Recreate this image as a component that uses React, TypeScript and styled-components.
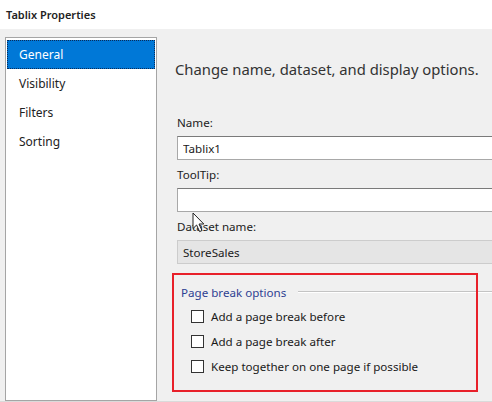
import styled, { createGlobalStyle } from "styled-components";

const GlobalStyle = createGlobalStyle`
  html, body {
    margin: 0;
    padding: 0;
    background: #f0f0f0;
  }
  body {
    font-family: "Noto Sans", "Open Sans", sans-serif;
    font-size: 11.6px;
    color: #1a1a1a;
  }
`;

const pages = ["General", "Visibility", "Filters", "Sorting"];
const breakOptions = [
  "Add a page break before",
  "Add a page break after",
  "Keep together on one page if possible",
];

export default function App() {
  return (
    <>
      <GlobalStyle />
      <Window>
        <TitleBar>Tablix Properties</TitleBar>
        <Body>
          <Sidebar>
            {pages.map((p, i) => (
              <NavItem key={p} $active={i === 0}>
                {p}
              </NavItem>
            ))}
          </Sidebar>
          <Main>
            <Heading>Change name, dataset, and display options.</Heading>
            <Label $first>Name:</Label>
            <TextBox defaultValue="Tablix1" />
            <Label>ToolTip:</Label>
            <FieldWrap>
              <TextBox defaultValue="" />
              <Cursor width="13" height="21" viewBox="0 0 13 21">
                <path
                  d="M1 1 L1 16.5 L4.6 13 L7.6 19.6 L10 18.5 L7 12 L11.8 12 Z"
                  fill="#fff"
                  stroke="#222"
                  strokeWidth="1"
                  strokeLinejoin="round"
                />
              </Cursor>
            </FieldWrap>
            <Label>Dataset name:</Label>
            <Dropdown>StoreSales</Dropdown>
            <GroupBox>
              <Legend>
                <LegendText>Page break options</LegendText>
                <LegendLine />
              </Legend>
              {breakOptions.map((o) => (
                <CheckRow key={o}>
                  <CheckBox />
                  <span>{o}</span>
                </CheckRow>
              ))}
              <Annotation />
            </GroupBox>
          </Main>
        </Body>
      </Window>
    </>
  );
}

const Window = styled.div`
  width: 492px;
  height: 402px;
  overflow: hidden;
  display: flex;
  flex-direction: column;
  background: #f0f0f0;
`;

const TitleBar = styled.div`
  height: 29px;
  flex: 0 0 29px;
  background: #fff;
  padding-left: 6px;
  display: flex;
  align-items: center;
  font-weight: 600;
  font-size: 11px;
  color: #222;
  box-sizing: border-box;
`;

const Body = styled.div`
  flex: 1;
  display: flex;
  align-items: flex-start;
  overflow: hidden;
  border-bottom: 1px solid #dadada;
`;

const Sidebar = styled.div`
  flex: 0 0 152px;
  margin: 8px 0 0 5px;
  width: 152px;
  height: 364px;
  box-sizing: border-box;
  border: 1px solid #a5a5a5;
  background: #fff;
  padding: 2px 1px;
  display: flex;
  flex-direction: column;
`;

const NavItem = styled.div<{ $active?: boolean }>`
  height: 29px;
  flex: 0 0 29px;
  display: flex;
  align-items: center;
  padding-left: 12px;
  font-size: 12px;
  box-sizing: border-box;
  color: ${(p) => (p.$active ? "#fff" : "#222")};
  background: ${(p) => (p.$active ? "#0078d7" : "transparent")};
  outline: ${(p) => (p.$active ? "1px dotted #0a2c5a" : "none")};
  outline-offset: -1px;
`;

const Main = styled.div`
  flex: 0 0 340px;
  margin-left: 20px;
  padding-top: 30px;
  display: flex;
  flex-direction: column;
`;

const Heading = styled.div`
  font-size: 14.8px;
  line-height: 20px;
  color: #333;
  margin-left: -2px;
  white-space: nowrap;
`;

const Label = styled.div<{ $first?: boolean }>`
  line-height: 16px;
  margin-top: ${(p) => (p.$first ? "36px" : "7px")};
  margin-bottom: 5px;
  color: #222;
`;

const FieldWrap = styled.div`
  position: relative;
`;

const TextBox = styled.input`
  display: block;
  width: 100%;
  height: 24px;
  box-sizing: border-box;
  margin: 0;
  border: 1px solid #a8a8a8;
  border-top-color: #7a7a7a;
  background: #fff;
  padding: 0 5px;
  font-family: inherit;
  font-size: 11.6px;
  color: #1a1a1a;
  outline: none;
`;

const Cursor = styled.svg`
  position: absolute;
  left: 15px;
  top: 24px;
`;

const Dropdown = styled.div`
  height: 24px;
  box-sizing: border-box;
  border: 1px solid #cccccc;
  background: #e5e5e5;
  padding-left: 5px;
  display: flex;
  align-items: center;
  color: #1a1a1a;
`;

const GroupBox = styled.div`
  position: relative;
  margin-top: 20px;
  display: flex;
  flex-direction: column;
`;

const Legend = styled.div`
  display: flex;
  align-items: center;
  height: 16px;
  margin-bottom: 4px;
`;

const LegendText = styled.span`
  margin-left: 4px;
  color: #2e3f92;
  white-space: nowrap;
`;

const LegendLine = styled.div`
  flex: 1;
  margin-left: 12px;
  border-top: 1px solid #c4c4c4;
  border-bottom: 1px solid #fff;
`;

const CheckRow = styled.label`
  height: 25px;
  display: flex;
  align-items: center;
  padding-left: 14px;
  gap: 7px;
  color: #1a1a1a;
  white-space: nowrap;
`;

const CheckBox = styled.span`
  width: 13px;
  height: 13px;
  box-sizing: border-box;
  border: 1px solid #333;
  background: #fff;
  flex: 0 0 13px;
`;

const Annotation = styled.div`
  position: absolute;
  left: -5px;
  top: -11px;
  width: 306px;
  height: 119px;
  box-sizing: border-box;
  border: 2px solid #e8202a;
  pointer-events: none;
`;
